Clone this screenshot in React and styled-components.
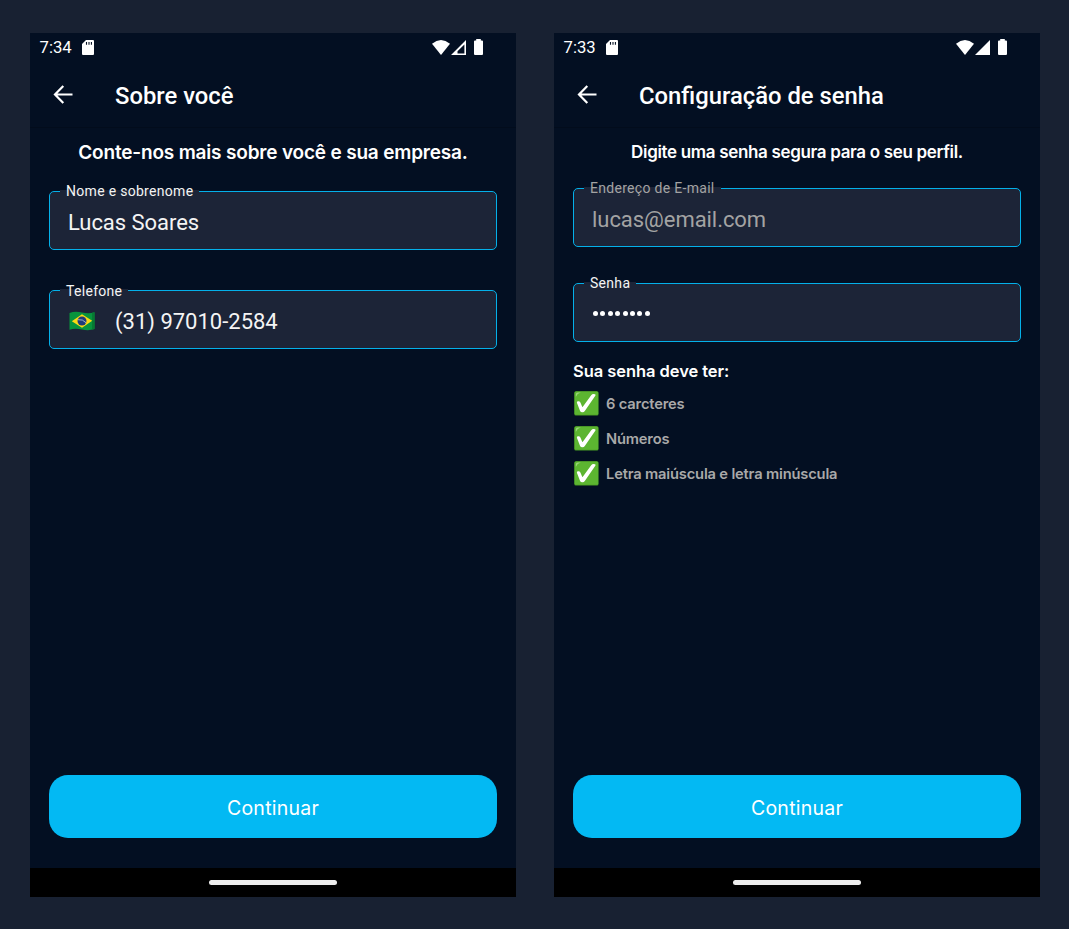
import React from "react";
import styled, { createGlobalStyle } from "styled-components";

const GlobalStyle = createGlobalStyle`
  * { box-sizing: border-box; }
  body { margin: 0; background: #182132; }
`;

const Page = styled.main`
  display: flex;
  gap: 38px;
  width: 1069px;
  height: 929px;
  padding: 33px 29px 32px 30px;
  background: #182132;
  font-family: Roboto, "Liberation Sans", sans-serif;
  color: #fff;
`;

const Screen = styled.section`
  display: flex;
  flex-direction: column;
  width: 486px;
  height: 864px;
  background: #030f22;
`;

const StatusBar = styled.div`
  display: flex;
  align-items: center;
  height: 29px;
  padding: 0 33.5px 0 9.500px;
`;

const Clock = styled.span`
  width: 42px;
  padding-top: 1px;
  font-size: 16.7px;
  line-height: 28px;
  white-space: nowrap;
`;

const StatusIcons = styled.div`
  display: flex;
  align-items: center;
  height: 28px;
  margin: 0 0 1px auto;
`;

const Header = styled.header`
  display: flex;
  align-items: center;
  height: 66px;
  padding-left: 23px;
  border-bottom: 1px solid #020c1c;
`;

const BackButton = styled.button`
  display: flex;
  width: 62px;
  padding: 0;
  border: 0;
  background: none;
`;

const Title = styled.h1`
  margin: 2px 0 0;
  font-size: 23.8px;
  font-weight: 500;
  line-height: 30px;
  white-space: nowrap;
`;

const Content = styled.div`
  display: flex;
  flex-direction: column;
  flex: 1;
  padding: 0 19px 30px;
`;

const Lead = styled.p`
  height: ${(p) => p.$height}px;
  margin: 0;
  padding-top: ${(p) => p.$top}px;
  font-family: Inter, sans-serif;
  font-size: ${(p) => p.$size}px;
  font-weight: 600;
  line-height: 24px;
  letter-spacing: ${(p) => p.$spacing}px;
  text-align: center;
  white-space: nowrap;
`;

const Field = styled.div`
  position: relative;
  display: flex;
  align-items: center;
  height: 59px;
  margin-bottom: ${(p) => p.$after}px;
  padding: 4px 18px 0;
  border: 1px solid #04b0e9;
  border-radius: 5px;
  background: #1c2437;
  color: ${(p) => (p.$muted ? "#a3a3a3" : "#f4f4f4")};
`;

const FieldLabel = styled.label`
  position: absolute;
  top: -2px;
  left: 10px;
  height: 14px;
  padding: 0 6px;
  background: #1c2437;
  font-size: 14px;
  line-height: ${(p) => p.$line ?? 4}px;
  letter-spacing: 0.3px;
  white-space: nowrap;
`;

const FieldValue = styled.span`
  font-size: 22px;
  line-height: 28px;
  letter-spacing: ${(p) => p.$spacing}px;
  white-space: nowrap;
`;

const FlagSlot = styled.span`
  display: flex;
  width: 47px;
  padding: 0 0 2px 1px;
`;

const Dots = styled.span`
  display: flex;
  gap: 2.4px;
  padding: 0 0 2px 1px;
`;

const Dot = styled.i`
  width: 5px;
  height: 5px;
  border-radius: 50%;
  background: #fff;
`;

const RulesTitle = styled.h2`
  margin: 0 0 9px;
  font-family: Inter, sans-serif;
  font-size: 16.5px;
  font-weight: 600;
  line-height: 22px;
  letter-spacing: -0.06px;
`;

const Rules = styled.ul`
  display: flex;
  flex-direction: column;
  gap: 10px;
  margin: 0;
  padding: 0;
  list-style: none;
`;

const Rule = styled.li`
  display: flex;
  align-items: center;
  gap: 7px;
  height: 25px;
  padding-left: 1px;
  font-family: Inter, sans-serif;
  font-size: 14.7px;
  font-weight: 600;
  letter-spacing: -0.17px;
  color: #a9a9a9;
  white-space: nowrap;
`;

const Continue = styled.button`
  height: 63px;
  margin-top: auto;
  padding: 2px 0 0;
  border: 0;
  border-radius: 19px;
  background: #03b9f3;
  color: #fff;
  font-family: Inter, sans-serif;
  font-size: 19.5px;
  font-weight: 400;
  letter-spacing: 0.25px;
`;

const NavBar = styled.footer`
  display: flex;
  align-items: center;
  justify-content: center;
  height: 29px;
  background: #000;
`;

const NavHandle = styled.div`
  width: 128px;
  height: 5px;
  border-radius: 3px;
  background: #ededed;
`;

const SignalIcon = styled.svg`
  margin-left: 1px;
`;

const BatteryIcon = styled.svg`
  margin-left: 8px;
`;

const SdCard = () => (
  <svg width="12" height="15" viewBox="0 0 12 15">
    <path fill="#fff" d="M4 0h7a1 1 0 0 1 1 1v13a1 1 0 0 1-1 1H1a1 1 0 0 1-1-1V4z" />
    <path stroke="#030f22" strokeWidth="1.1" d="M4.500 2v2.700M7 2v2.700M9.400 2v2.700" />
  </svg>
);

const Wifi = () => (
  <svg width="18" height="15" viewBox="0 0 18 15">
    <path fill="#fff" d="M0 3.800Q9-3.600 18 3.800L9 15z" />
  </svg>
);

const Signal = ({ full }) => (
  <SignalIcon width="15" height="15" viewBox="0 0 15 15">
    {full ? (
      <path fill="#fff" d="M15 0v15H0z" />
    ) : (
      <path fill="#fff" fillRule="evenodd" d="M15 0v15H0zM13.400 4.500L6.500 11.200v2.200h6.900z" />
    )}
  </SignalIcon>
);

const Battery = () => (
  <BatteryIcon width="9" height="16" viewBox="0 0 9 16">
    <path fill="#fff" d="M2.200 0h4.600v1.400H8a1 1 0 0 1 1 1V15a1 1 0 0 1-1 1H1a1 1 0 0 1-1-1V2.400a1 1 0 0 1 1-1h1.200z" />
  </BatteryIcon>
);

const Arrow = () => (
  <svg width="20" height="19" viewBox="0 0 20 19" fill="none" stroke="#fff" strokeWidth="2.2">
    <path d="M19.500 9.500H2.500M10.300 1L2 9.500l8.300 8.500" />
  </svg>
);

const BrazilFlag = () => (
  <svg width="26" height="20" viewBox="0 0 26 20">
    <path fill="#07943d" d="M0.500 2Q6-.2 13 1.500T25.500 1.200V18Q20 20 13 18.500T.5 18.800z" />
    <path fill="#067a32" d="M23 1.800L25.500 1.200V18l-2.500 .7z" />
    <path fill="#fbd913" d="M2.800 10.300L13 3.300l10.200 6.500L13 16.700z" />
    <circle cx="13" cy="10" r="4.500" fill="#203a79" />
    <path fill="none" stroke="#b9cbdc" strokeWidth=".8" d="M8.800 8.700q5-.8 8.200 3" />
  </svg>
);

const Check = () => (
  <svg width="25" height="25" viewBox="0 0 25 25">
    <rect x=".3" y=".3" width="24.200" height="24.200" rx="1.500" fill="#489b22" />
    <rect x=".6" y=".5" width="23.600" height="23.200" rx="1.500" fill="#5cb531" />
    <path fill="#9bd57b" d="M1.800 6V3.500Q2 1.700 3.800 1.600h3Q3.200 2.500 1.800 6z" />
    <path
      fill="#fff"
      d="M2.900 11.700q-.3-1.100 1-1.400 1.800-.3 2.500 1.200l1.800 4.200q.4.700.8-.1L17.200 4.300q.9-1.300 2.700-1.200 2.300.1 1.400 1.700L10.800 20q-.8 1.400-2.500 1.300-1.600 0-2.200-1.300z"
    />
  </svg>
);

const Phone = ({ time, fullSignal, title, children }) => (
  <Screen>
    <StatusBar>
      <Clock>{time}</Clock>
      <SdCard />
      <StatusIcons>
        <Wifi />
        <Signal full={fullSignal} />
        <Battery />
      </StatusIcons>
    </StatusBar>
    <Header>
      <BackButton aria-label="Voltar"><Arrow /></BackButton>
      <Title>{title}</Title>
    </Header>
    <Content>
      {children}
      <Continue>Continuar</Continue>
    </Content>
    <NavBar><NavHandle /></NavBar>
  </Screen>
);

const requirements = ["6 carcteres", "Números", "Letra maiúscula e letra minúscula"];

export default function App() {
  return (
    <>
      <GlobalStyle />
      <Page>
        <Phone time="7:34" title="Sobre você">
          <Lead $height={63} $top={13} $size={19} $spacing={-0.18}>
            Conte-nos mais sobre você e sua empresa.
          </Lead>
          <Field $after={40}>
            <FieldLabel $line={2}>Nome e sobrenome</FieldLabel>
            <FieldValue $spacing={-0.05}>Lucas Soares</FieldValue>
          </Field>
          <Field $after={0}>
            <FieldLabel>Telefone</FieldLabel>
            <FlagSlot><BrazilFlag /></FlagSlot>
            <FieldValue $spacing={0}>(31) 97010-2584</FieldValue>
          </Field>
        </Phone>
        <Phone time="7:33" fullSignal title="Configuração de senha">
          <Lead $height={60} $top={12} $size={17} $spacing={-0.33}>
            Digite uma senha segura para o seu perfil.
          </Lead>
          <Field $after={36} $muted>
            <FieldLabel $line={2}>Endereço de E-mail</FieldLabel>
            <FieldValue $spacing={-0.05}>lucas@email.com</FieldValue>
          </Field>
          <Field $after={18}>
            <FieldLabel $line={3}>Senha</FieldLabel>
            <Dots>
              {Array.from({ length: 8 }, (_, i) => <Dot key={i} />)}
            </Dots>
          </Field>
          <RulesTitle>Sua senha deve ter:</RulesTitle>
          <Rules>
            {requirements.map((text) => (
              <Rule key={text}>
                <Check />
                {text}
              </Rule>
            ))}
          </Rules>
        </Phone>
      </Page>
    </>
  );
}
